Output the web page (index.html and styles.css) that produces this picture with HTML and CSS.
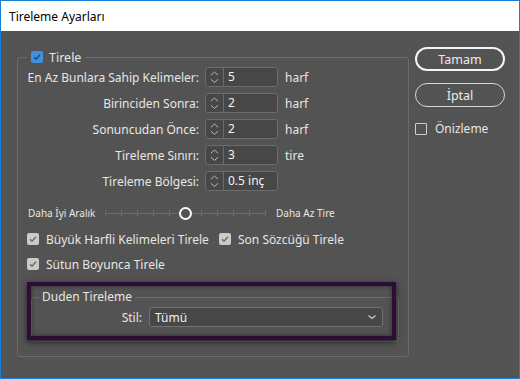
FILE: index.html
```html
<!DOCTYPE html>
<html lang="tr">
<head>
    <meta charset="UTF-8">
    <title>Tireleme Ayarları</title>
    <link rel="stylesheet" href="styles.css">
</head>
<body>
    <div class="window">
        <div class="title-bar">Tireleme Ayarları</div>

        <div class="dialog">
            <fieldset class="group">
                <legend class="legend-check">
                    <span class="check blue">
                        <svg viewBox="0 0 12 12"><path d="M3 6.2l2 2 4-4.4" /></svg>
                    </span>
                    Tirele
                </legend>

                <div class="fields">
                    <div class="field-row">
                        <label class="field-label">En Az Bunlara Sahip Kelimeler:</label>
                        <div class="spinner">
                            <span class="arrows">
                                <svg viewBox="0 0 18 20"><path d="M5 8l4-3.5 4 3.5M5 12.5l4 3.5 4-3.5" /></svg>
                            </span>
                            <span class="value">5</span>
                        </div>
                        <span class="unit">harf</span>
                    </div>
                    <div class="field-row">
                        <label class="field-label">Birinciden Sonra:</label>
                        <div class="spinner">
                            <span class="arrows">
                                <svg viewBox="0 0 18 20"><path d="M5 8l4-3.5 4 3.5M5 12.5l4 3.5 4-3.5" /></svg>
                            </span>
                            <span class="value">2</span>
                        </div>
                        <span class="unit">harf</span>
                    </div>
                    <div class="field-row">
                        <label class="field-label">Sonuncudan Önce:</label>
                        <div class="spinner">
                            <span class="arrows">
                                <svg viewBox="0 0 18 20"><path d="M5 8l4-3.5 4 3.5M5 12.5l4 3.5 4-3.5" /></svg>
                            </span>
                            <span class="value">2</span>
                        </div>
                        <span class="unit">harf</span>
                    </div>
                    <div class="field-row">
                        <label class="field-label">Tireleme Sınırı:</label>
                        <div class="spinner">
                            <span class="arrows">
                                <svg viewBox="0 0 18 20"><path d="M5 8l4-3.5 4 3.5M5 12.5l4 3.5 4-3.5" /></svg>
                            </span>
                            <span class="value">3</span>
                        </div>
                        <span class="unit">tire</span>
                    </div>
                    <div class="field-row">
                        <label class="field-label">Tireleme Bölgesi:</label>
                        <div class="spinner">
                            <span class="arrows">
                                <svg viewBox="0 0 18 20"><path d="M5 8l4-3.5 4 3.5M5 12.5l4 3.5 4-3.5" /></svg>
                            </span>
                            <span class="value">0.5 inç</span>
                        </div>
                    </div>
                </div>

                <div class="slider-row">
                    <span class="slider-label">Daha İyi Aralık</span>
                    <div class="slider">
                        <span class="knob"></span>
                    </div>
                    <span class="slider-end">Daha Az Tire</span>
                </div>

                <div class="check-row">
                    <div class="check-item wide">
                        <span class="check gray">
                            <svg viewBox="0 0 12 12"><path d="M3 6.2l2 2 4-4.4" /></svg>
                        </span>
                        Büyük Harfli Kelimeleri Tirele
                    </div>
                    <div class="check-item">
                        <span class="check gray">
                            <svg viewBox="0 0 12 12"><path d="M3 6.2l2 2 4-4.4" /></svg>
                        </span>
                        Son Sözcüğü Tirele
                    </div>
                </div>
                <div class="check-row second">
                    <div class="check-item">
                        <span class="check gray">
                            <svg viewBox="0 0 12 12"><path d="M3 6.2l2 2 4-4.4" /></svg>
                        </span>
                        Sütun Boyunca Tirele
                    </div>
                </div>

                <div class="duden">
                    <fieldset class="duden-group">
                        <legend class="legend-text">Duden Tireleme</legend>
                        <div class="style-row">
                            <label class="style-label">Stil:</label>
                            <div class="select">
                                <span>Tümü</span>
                                <svg viewBox="0 0 10 6"><path d="M1.5 1.5l3.5 3 3.5-3" /></svg>
                            </div>
                        </div>
                    </fieldset>
                    <div class="highlight"></div>
                </div>
            </fieldset>

            <div class="actions">
                <button class="btn primary">Tamam</button>
                <button class="btn">İptal</button>
                <div class="preview">
                    <span class="check empty"></span>
                    Önizleme
                </div>
            </div>
        </div>
    </div>
</body>
</html>
```

FILE: styles.css
```css
* {
    box-sizing: border-box;
}
body {
    margin: 0;
    font-family: 'Noto Sans', 'Open Sans', sans-serif;
    font-size: 12px;
    color: #e6e6e6;
}
.window {
    width: 520px;
    height: 379px;
    border: 1px solid #1a7fd6;
    background: #535353;
    display: flex;
    flex-direction: column;
}
.title-bar {
    height: 30px;
    background: #ffffff;
    color: #000;
    padding-left: 8px;
    line-height: 31px;
    font-size: 12px;
}
.dialog {
    display: flex;
    padding: 18px 0 0 16px;
}
.group {
    width: 392px;
    margin: 0;
    padding: 2px 0 14px 0;
    border: 1px solid #6b6b6b;
    border-radius: 3px;
}
.legend-check {
    display: flex;
    align-items: center;
    gap: 6px;
    height: 16px;
    margin-left: 9px;
    padding: 0 4px;
    font-size: 12.5px;
}
.check {
    width: 12px;
    height: 12px;
    border-radius: 2px;
    display: inline-flex;
    flex-shrink: 0;
}
.check svg {
    width: 12px;
    height: 12px;
    fill: none;
    stroke-width: 1.5;
}
.check.blue {
    background: #3f8fe3;
}
.check.blue svg {
    stroke: #28476b;
}
.check.gray {
    background: #cacaca;
}
.check.gray svg {
    stroke: #6e6e6e;
}
.check.empty {
    border: 1px solid #cfcfcf;
    border-radius: 1px;
}
.fields {
    display: flex;
    flex-direction: column;
    gap: 6px;
}
.field-row {
    display: flex;
    align-items: center;
    height: 20px;
}
.field-label {
    width: 181px;
    text-align: right;
}
.spinner {
    display: flex;
    width: 73px;
    height: 20px;
    margin-left: 6px;
    background: #474747;
    border: 1px solid #6c6c6c;
    border-radius: 3px;
}
.arrows {
    width: 18px;
    border-right: 1px solid #6c6c6c;
    display: flex;
}
.arrows svg {
    width: 17px;
    height: 18px;
    fill: none;
    stroke: #c4c4c4;
    stroke-width: 1;
}
.value {
    padding-left: 4px;
    line-height: 18px;
    color: #f2f2f2;
}
.unit {
    margin-left: 7px;
}
.slider-row {
    display: flex;
    align-items: center;
    height: 16px;
    margin-top: 14px;
    padding-left: 10px;
}
.slider-label {
    width: 77px;
    font-size: 10px;
}
.slider {
    position: relative;
    width: 161px;
    height: 7px;
    background:
        linear-gradient(#6b6b6b, #6b6b6b) 0 3px / 100% 1px no-repeat,
        repeating-linear-gradient(to right, #6b6b6b 0 1px, transparent 1px 16px);
}
.knob {
    position: absolute;
    left: 74px;
    top: -3px;
    width: 13px;
    height: 13px;
    border: 2px solid #fafafa;
    border-radius: 50%;
    background: #535353;
}
.slider-end {
    margin-left: 10px;
    font-size: 10px;
}
.check-row {
    display: flex;
    align-items: center;
    height: 16px;
    margin-top: 10px;
    padding-left: 9px;
}
.check-row.second {
    margin-top: 9px;
}
.check-item {
    display: flex;
    align-items: center;
    gap: 7px;
}
.check-item.wide {
    width: 192px;
}
.duden {
    position: relative;
    margin: 17px 0 0 13px;
    width: 368px;
}
.duden-group {
    margin: 0;
    padding: 2px 0 14px 0;
    border: 1px solid #6b6b6b;
    border-radius: 3px;
}
.legend-text {
    height: 16px;
    line-height: 16px;
    margin-left: 7px;
    padding: 0 3px;
    font-size: 12px;
}
.style-row {
    display: flex;
    align-items: center;
}
.style-label {
    width: 110px;
    text-align: right;
    margin-right: 7px;
}
.select {
    display: flex;
    align-items: center;
    justify-content: space-between;
    width: 234px;
    height: 20px;
    padding: 0 5px;
    background: #474747;
    border: 1px solid #717171;
    border-radius: 3px;
    color: #f2f2f2;
}
.select svg {
    width: 10px;
    height: 6px;
    fill: none;
    stroke: #cfcfcf;
    stroke-width: 1.2;
}
.highlight {
    position: absolute;
    left: -4px;
    top: -7px;
    width: 369px;
    height: 58px;
    border: 4px solid #2b0d35;
    box-shadow: 0 2px 6px rgba(0, 0, 0, 0.6), inset 0 0 4px rgba(0, 0, 0, 0.5);
}
.actions {
    display: flex;
    flex-direction: column;
    margin-left: 6px;
    margin-top: -2px;
}
.btn {
    width: 90px;
    height: 24px;
    margin-bottom: 12px;
    background: transparent;
    color: #ececec;
    font-family: inherit;
    font-size: 12.5px;
    border: 1px solid #d6d6d6;
    border-radius: 12px;
    padding: 0;
}
.btn.primary {
    border: 2px solid #f4f4f4;
}
.preview {
    display: flex;
    align-items: center;
    gap: 8px;
    margin-top: 1px;
    font-size: 12px;
}
```
